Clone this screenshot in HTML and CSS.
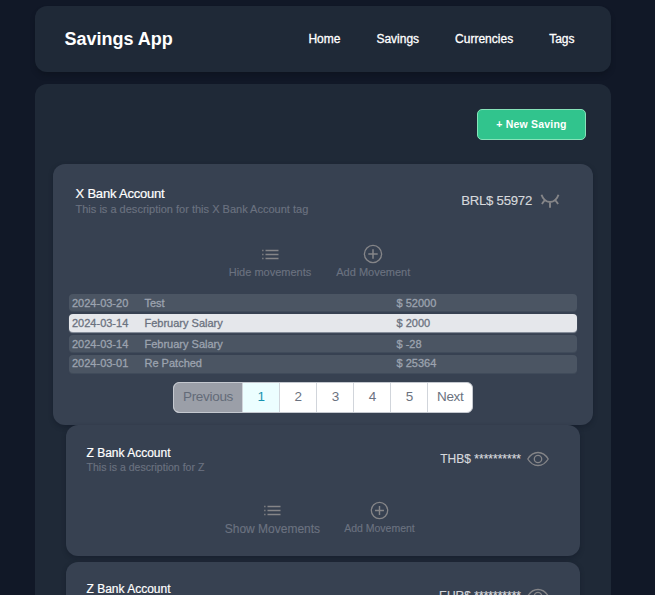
FILE: index.html
```html
<!DOCTYPE html>
<html lang="en">
<head>
<meta charset="utf-8">
<title>Savings App</title>
<link rel="stylesheet" href="styles.css">
</head>
<body>
<svg class="defs" aria-hidden="true">
  <symbol id="list" viewBox="0 0 17 11"><path d="M.2 1.500h1.300M.2 5.500h1.300M.2 9.500h1.300M3.500 1.500h13M3.500 5.500h13M3.500 9.500h13" fill="none" stroke="currentColor" stroke-width="1.500"/></symbol>
  <symbol id="plus" viewBox="0 0 20 20"><circle cx="10" cy="10" r="8.6" fill="none" stroke="currentColor" stroke-width="1.35"/><path d="M10 5.300v9.400M5.300 10h9.400" stroke="currentColor" stroke-width="1.5"/></symbol>
  <symbol id="eye" viewBox="0 0 22 16"><path d="M.8 8C3.4 3.7 7 1.5 11 1.5S18.600 3.700 21.200 8C18.600 12.300 15 14.500 11 14.500S3.400 12.300.8 8Z" fill="none" stroke="currentColor" stroke-width="1.300"/><circle cx="11" cy="8" r="3.700" fill="none" stroke="currentColor" stroke-width="1.300"/></symbol>
  <symbol id="closed" viewBox="0 0 20 16"><path d="M1.500 1.800C3.200 6.800 6.200 9 10 9S16.800 6.800 18.500 1.800M10 9v5.700M4.600 7.300 1.900 11M15.400 7.300l2.700 3.700" fill="none" stroke="currentColor" stroke-width="1.900"/></symbol>
</svg>
<header class="navbar">
  <h1 class="brand">Savings App</h1>
  <nav class="links"><a>Home</a><a>Savings</a><a>Currencies</a><a>Tags</a></nav>
</header>
<main class="panel">
  <div class="toolbar"><button class="new">+ New Saving</button></div>
  <article class="card active">
    <div class="summary">
      <div><h2 class="name">X Bank Account</h2><p class="description">This is a description for this X Bank Account tag</p></div>
      <div class="balance"><span class="amount">BRL$ 55972</span><svg class="closed-eye"><use href="#closed"/></svg></div>
    </div>
    <div class="actions">
      <div class="action"><svg class="list-icon"><use href="#list"/></svg><span class="hide">Hide movements</span></div>
      <div class="action"><svg class="plus-icon"><use href="#plus"/></svg><span class="add">Add Movement</span></div>
    </div>
    <div class="movements">
      <div class="row"><span>2024-03-20</span><span>Test</span><span>$ 52000</span></div>
      <div class="row selected"><span>2024-03-14</span><span>February Salary</span><span>$ 2000</span></div>
      <div class="row"><span>2024-03-14</span><span>February Salary</span><span>$ -28</span></div>
      <div class="row last"><span>2024-03-01</span><span>Re Patched</span><span>$ 25364</span></div>
    </div>
    <div class="pages"><span class="previous">Previous</span><span class="current">1</span><span>2</span><span>3</span><span>4</span><span>5</span><span class="next">Next</span></div>
  </article>
  <article class="card">
    <div class="summary">
      <div><h2 class="name">Z Bank Account</h2><p class="description">This is a description for Z</p></div>
      <div class="balance"><span class="amount">THB$ **********</span><svg class="eye"><use href="#eye"/></svg></div>
    </div>
    <div class="actions">
      <div class="action"><svg class="list-icon"><use href="#list"/></svg><span class="show">Show Movements</span></div>
      <div class="action"><svg class="plus-icon"><use href="#plus"/></svg><span class="add">Add Movement</span></div>
    </div>
  </article>
  <article class="card following">
    <div class="summary">
      <div><h2 class="name">Z Bank Account</h2><p class="description">This is a description for Z</p></div>
      <div class="balance"><span class="amount">EUR$ **********</span><svg class="eye"><use href="#eye"/></svg></div>
    </div>
  </article>
</main>
</body>
</html>
```
FILE: styles.css
```css
* { box-sizing: border-box; }
html, body { height: 100%; overflow: hidden; }
body { margin: 0; padding: 6px 44px 0 35px; background: #111827; color: #fff; font-family: "Liberation Sans", Arial, sans-serif; }
h1, h2, p { margin: 0; }
svg { display: block; flex: none; color: #858588; }
.defs { display: none; }
.navbar { height: 66px; border-radius: 12px; background: #1f2937; box-shadow: 0 4px 5px -1px #0b101b88; display: flex; justify-content: space-between; align-items: center; padding: 0 36.500px 0 29.500px; }
.brand { font-size: 18px; line-height: 22px; }
.links { display: flex; gap: 36px; font-size: 12px; line-height: 16px; -webkit-text-stroke: .3px currentColor; }
.panel { margin-top: 12px; height: 511px; overflow: hidden; border-radius: 12px 12px 0 0; background: #1f2937; padding: 25px 18px 0; }
.toolbar { display: flex; justify-content: flex-end; padding-right: 7px; height: 55px; }
.new { width: 109px; height: 31px; border: 1px solid #86e3b9; border-radius: 5px; background: #31c48d; color: #fff; font: bold 10.500px/15px "Liberation Sans", Arial, sans-serif; letter-spacing: .2px; padding: 0; }
.card { height: 131px; margin: 0 13px; padding: 20px 31px 0 20.500px; border-radius: 12px; background: #374151; box-shadow: 0 2px 4px #111a2780; }
.card.following { margin-top: 6px; padding-top: 19px; }
.following .balance { padding-top: 2px; }
.card.active { height: 261px; margin: 0; padding: 22px 16px 0; }
.summary { display: flex; justify-content: space-between; height: 55px; }
.name { padding-top: 1px; font-size: 12px; line-height: 14px; font-weight: 400; -webkit-text-stroke: .2px currentColor; }
.description { font-size: 10.500px; line-height: 14px; color: #6b7280; -webkit-text-stroke: .15px currentColor; letter-spacing: .02px; }
.balance { display: flex; height: 28px; align-items: center; gap: 6px; color: #d6d8dc; }
.amount { font-size: 12px; -webkit-text-stroke: .15px currentColor; }
.eye { width: 22px; height: 16px; }
.closed-eye { width: 20px; height: 16px; }
.actions { display: flex; justify-content: center; gap: 24px; padding-right: 6px; margin-left: 10px; color: #6b7280; font-size: 10.500px; -webkit-text-stroke: .15px currentColor; }
.action { display: flex; flex-direction: column; align-items: center; }
.list-icon { width: 17px; height: 11px; margin: 5px 0 4px; }
.plus-icon { width: 19px; height: 19px; margin: 1px 0 0; }
.action span { line-height: 17px; }
.action .show { font-size: 12px; line-height: 19px; }
.active .summary { height: 54px; padding: 0 17px 0 6.500px; }
.active .name { font-size: 13px; letter-spacing: -.2px; }
.active .description { font-size: 11px; letter-spacing: .01px; line-height: 17px; }
.active .balance { gap: 8px; height: 29px; }
.active .amount { font-size: 13.200px; letter-spacing: -.25px; }
.active .actions { margin: 4px 0 0; padding-right: 7px; gap: 25px; font-size: 11px; height: 50px; }
.active .plus-icon { width: 20px; height: 20px; margin-top: 0; }
.active .action span { line-height: 16px; }
.movements { display: flex; flex-direction: column; gap: 3px; height: 79px; }
.row { display: grid; grid-template-columns: 72.500px 252px 1fr; height: 17px; padding-left: 3px; border-radius: 4px; background: #4b5563; box-shadow: 0 1px 1px #424d5b; color: #9ca3af; font-size: 11px; line-height: 18px; -webkit-text-stroke: .3px currentColor; }
.row.selected { height: 18px; background: #e5e7eb; box-shadow: 0 1px 1px #9097a2; color: #6b7280; line-height: 18px; }
.row.last { height: 18px; line-height: 17px; }
.pages { display: flex; width: 300px; height: 31px; margin: 9px auto 0; border: 1px solid #c4c8cf; border-radius: 6px; overflow: hidden; background: #fff; color: #6b7280; font-size: 13.500px; letter-spacing: -.3px; line-height: 28px; text-align: center; }
.pages span { width: 37.100px; border-right: 1px solid #d1d5db; }
.pages .previous { width: 69px; background: #9b9fa8; color: #636b78; }
.pages .current { background: #ecfeff; color: #1793b0; }
.pages .next { flex: 1; border: 0; }
```
